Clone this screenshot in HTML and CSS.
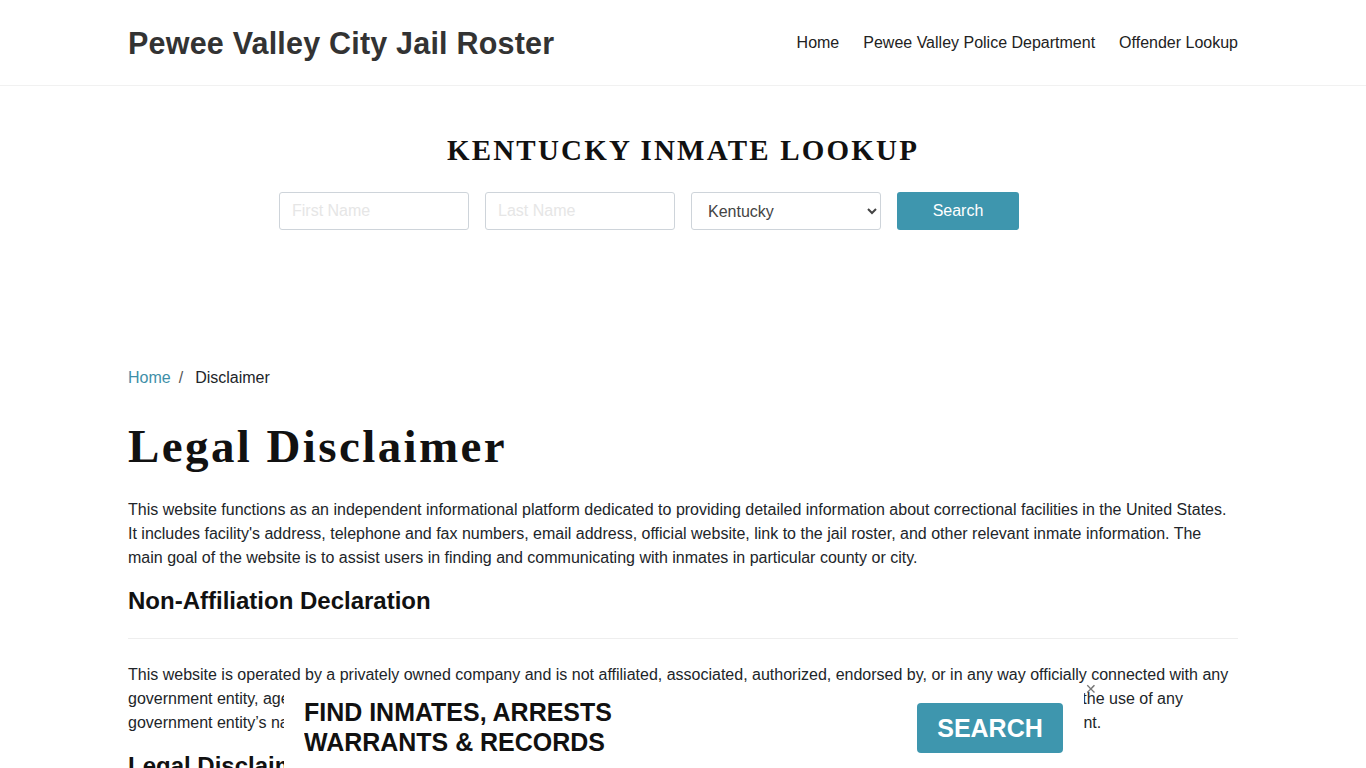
FILE: index.html
```html
<!DOCTYPE html>
<html lang="en">
<head>
<meta charset="utf-8">
<title>Legal Disclaimer - Pewee Valley City Jail Roster</title>
<link rel="stylesheet" href="styles.css">
</head>
<body>
<header class="site-header">
  <div class="container header-row">
    <a class="brand" href="#">Pewee Valley City Jail Roster</a>
    <nav class="main-nav">
      <a href="#">Home</a>
      <a href="#">Pewee Valley Police Department</a>
      <a href="#">Offender Lookup</a>
    </nav>
  </div>
</header>

<section class="lookup">
  <h2 class="lookup-title">KENTUCKY INMATE LOOKUP</h2>
  <form class="lookup-form">
    <input class="field" type="text" placeholder="First Name">
    <input class="field" type="text" placeholder="Last Name">
    <select class="field select">
      <option>Kentucky</option>
    </select>
    <div class="btn-cell"><button class="btn-search" type="button">Search</button></div>
  </form>
</section>

<main class="container content">
  <ol class="breadcrumb">
    <li><a href="#">Home</a></li>
    <li class="sep">/</li>
    <li>Disclaimer</li>
  </ol>
  <h1 class="page-title">Legal Disclaimer</h1>
  <p>This website functions as an independent informational platform dedicated to providing detailed information about correctional facilities in the United States. It includes facility's address, telephone and fax numbers, email address, official website, link to the jail roster, and other relevant inmate information. The main goal of the website is to assist users in finding and communicating with inmates in particular county or city.</p>
  <h2 class="section-title">Non-Affiliation Declaration</h2>
  <hr class="rule">
  <p>This website is operated by a privately owned company and is not affiliated, associated, authorized, endorsed by, or in any way officially connected with any government entity, agency, or department. The use of any government entity's name, logo, or trademark does not imply affiliations with the use of any government entity’s name, logo, or trademark on this website is solely for informational purposes and does not imply official endorsement.</p>
  <h2 class="section-title">Legal Disclaimer</h2>
</main>

<div class="ad">
  <div class="ad-text">FIND INMATES, ARRESTS<br>WARRANTS &amp; RECORDS</div>
  <button class="ad-btn" type="button">SEARCH</button>
  <span class="ad-close">&#x2715;</span>
</div>
</body>
</html>
```

FILE: styles.css
```css
* { box-sizing: border-box; }
html, body { margin: 0; padding: 0; }
body {
  font-family: "Liberation Sans", Arial, sans-serif;
  font-size: 16px;
  line-height: 24px;
  color: #212529;
  background: #fff;
}
a { text-decoration: none; }
.container {
  width: 1110px;
  margin: 0 auto;
}
.site-header {
  border-bottom: 1px solid #f1f1f1;
}
.header-row {
  height: 85px;
  display: flex;
  align-items: center;
  justify-content: space-between;
}
.brand {
  font-size: 30.5px;
  font-weight: bold;
  color: #333;
  letter-spacing: 0.2px;
}
.main-nav {
  display: flex;
  gap: 24px;
}
.main-nav a {
  color: #222;
  font-size: 16px;
}
.lookup {
  padding-top: 47px;
  height: 280px;
}
.lookup-title {
  margin: 0;
  text-align: center;
  font-family: "Liberation Serif", "Times New Roman", serif;
  font-size: 29px;
  font-weight: bold;
  letter-spacing: 2.2px;
  line-height: 34px;
  color: #111;
}
.lookup-form {
  width: 808px;
  margin: 25px auto 0;
  display: grid;
  grid-template-columns: repeat(4, 190px);
  gap: 16px;
}
.field {
  height: 38px;
  border: 1px solid #ced4da;
  border-radius: 3px;
  padding: 0 12px;
  font-family: "Liberation Sans", Arial, sans-serif;
  font-size: 16px;
  color: #444;
  background: #fff;
}
.field::placeholder { color: #e6e6e6; }
.select { padding-left: 12px; }
.btn-search {
  width: 122px;
  height: 38px;
  border: none;
  border-radius: 3px;
  background: #3e96ae;
  color: #fff;
  font-family: "Liberation Sans", Arial, sans-serif;
  font-size: 16px;
}
.content { padding-bottom: 40px; }
.breadcrumb {
  list-style: none;
  margin: 0;
  padding: 0;
  display: flex;
  height: 24px;
}
.breadcrumb a { color: #3e8fa8; }
.breadcrumb .sep { padding: 0 12px 0 8px; color: #555; }
.page-title {
  margin: 26px 0 0;
  font-family: "Liberation Serif", "Times New Roman", serif;
  font-size: 47px;
  line-height: 60px;
  font-weight: bold;
  letter-spacing: 2.4px;
  color: #111;
}
p { margin: 22px 0 0; }
.section-title {
  margin: 17px 0 0;
  font-size: 24px;
  line-height: 28px;
  font-weight: bold;
  color: #111;
}
.rule {
  border: 0;
  border-top: 1px solid #eee;
  margin: 23px 0 0;
}
.rule + p { margin-top: 24px; }
.ad {
  position: fixed;
  left: 284px;
  bottom: 0;
  width: 800px;
  height: 84px;
  background: #fff;
  display: flex;
  align-items: center;
  justify-content: space-between;
  padding: 0 22px 0 20px;
}
.ad-text {
  font-family: "Liberation Sans", Arial, sans-serif;
  font-weight: bold;
  font-size: 26px;
  line-height: 30px;
  color: #111;
  transform: scaleX(0.96);
  transform-origin: left center;
  margin-top: 2px;
}
.ad-btn {
  width: 146px;
  height: 50px;
  margin-top: 4px;
  margin-right: -1px;
  border: none;
  border-radius: 4px;
  background: #3e96ae;
  color: #fff;
  font-family: "Liberation Sans", Arial, sans-serif;
  font-weight: bold;
  font-size: 25px;
}
.ad-close {
  position: absolute;
  right: -13px;
  top: -2px;
  font-size: 14px;
  line-height: 14px;
  color: #777;
}
```
